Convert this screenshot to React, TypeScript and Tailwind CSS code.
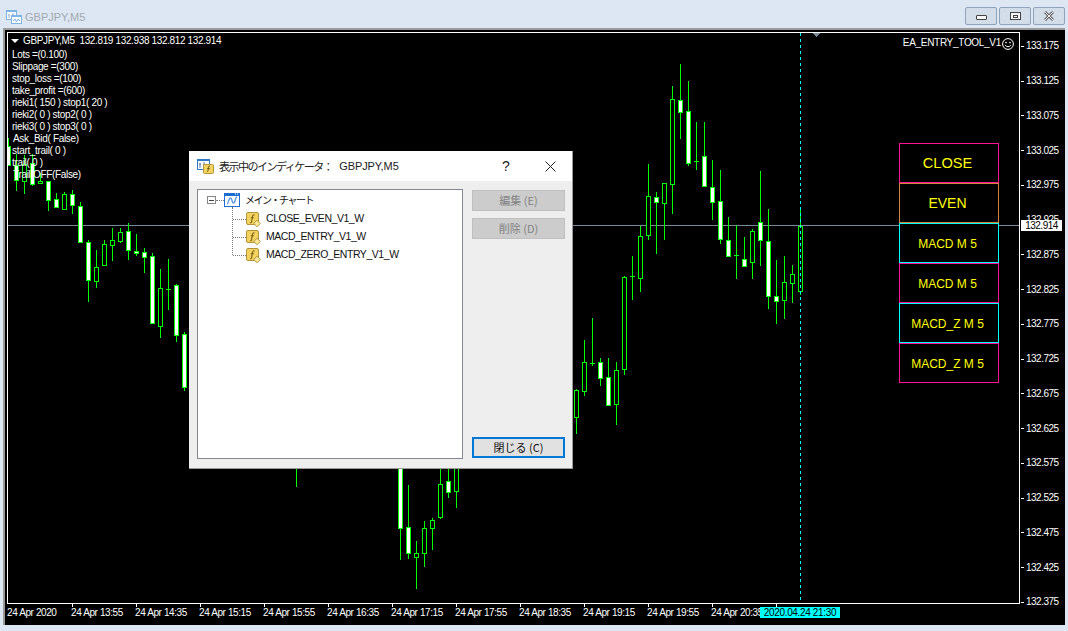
const FONT = "font-['Liberation_Sans',Arial,sans-serif]";
const JP = "font-['Noto_Sans_CJK_JP',sans-serif]";

// x, wick top, wick bottom, body top, body bottom, filled
type Candle = [number, number, number, number, number, boolean];

const candles: Candle[] = [
  [8, 138, 165, 146, 165, true],
  [16, 154, 191, 165, 180, true],
  [24, 155, 194, 164, 181, false],
  [32, 154, 186, 163, 184, true],
  [40, 173, 183, 181, 183, false],
  [48, 181, 211, 181, 200, true],
  [56, 193, 207, 199, 207, true],
  [64, 192, 210, 194, 209, false],
  [72, 190, 214, 194, 205, true],
  [80, 202, 242, 206, 242, true],
  [88, 240, 302, 242, 280, true],
  [96, 250, 288, 267, 281, false],
  [104, 240, 266, 244, 265, false],
  [112, 228, 261, 240, 245, false],
  [120, 228, 243, 232, 241, false],
  [128, 223, 260, 231, 250, true],
  [136, 234, 256, 251, 253, true],
  [144, 248, 273, 252, 257, true],
  [152, 253, 323, 256, 323, true],
  [160, 269, 338, 288, 326, false],
  [168, 259, 310, 289, 289, false],
  [176, 284, 342, 285, 335, true],
  [184, 332, 391, 334, 387, true],
  [296, 440, 487, 440, 440, false],
  [400, 440, 560, 440, 528, true],
  [408, 485, 559, 527, 553, true],
  [416, 541, 589, 553, 557, false],
  [424, 521, 567, 528, 553, false],
  [432, 518, 550, 520, 528, false],
  [440, 440, 519, 484, 517, false],
  [448, 440, 498, 481, 492, true],
  [456, 440, 508, 440, 491, false],
  [576, 389, 434, 390, 417, false],
  [584, 340, 396, 362, 391, false],
  [592, 318, 366, 363, 363, false],
  [600, 358, 386, 362, 378, true],
  [608, 358, 406, 377, 405, true],
  [616, 362, 425, 370, 404, false],
  [624, 276, 375, 277, 369, false],
  [632, 256, 300, 276, 276, false],
  [640, 226, 292, 236, 278, false],
  [648, 164, 240, 196, 235, false],
  [656, 192, 254, 197, 202, true],
  [664, 183, 240, 183, 203, false],
  [672, 86, 214, 99, 184, false],
  [680, 64, 139, 100, 112, true],
  [688, 81, 166, 111, 163, true],
  [696, 122, 170, 161, 161, false],
  [704, 122, 186, 156, 186, true],
  [712, 160, 220, 187, 202, true],
  [720, 170, 244, 201, 239, true],
  [728, 217, 256, 240, 256, true],
  [736, 225, 279, 255, 255, false],
  [744, 237, 266, 259, 266, true],
  [752, 229, 279, 231, 262, false],
  [760, 171, 266, 222, 240, true],
  [768, 209, 309, 241, 296, true],
  [776, 260, 324, 296, 301, true],
  [784, 256, 319, 282, 300, false],
  [792, 265, 303, 274, 283, false],
  [800, 209, 295, 226, 291, false],
];

const prices = [
  "133.175", "133.125", "133.075", "133.025", "132.975", "132.925", "132.875", "132.825", "132.775",
  "132.725", "132.675", "132.625", "132.575", "132.525", "132.475", "132.425", "132.375",
];

const times = [
  "24 Apr 2020", "24 Apr 13:55", "24 Apr 14:35", "24 Apr 15:15", "24 Apr 15:55", "24 Apr 16:35", "24 Apr 17:15",
  "24 Apr 17:55", "24 Apr 18:35", "24 Apr 19:15", "24 Apr 19:55", "24 Apr 20:35", "",
];

const params = [
  "Lots =(0.100)", "Slippage =(300)", "stop_loss =(100)", "take_profit =(600)", "rieki1( 150 ) stop1( 20 )",
  "rieki2( 0 ) stop2( 0 )", "rieki3( 0 ) stop3( 0 )", "Ask_Bid( False)", "start_trail( 0 )", "trail( 0 )",
  "Trail OFF(False)",
];

const buttons = [
  { label: "CLOSE", cls: "border-[#ff1493] text-[14.6px]" },
  { label: "EVEN", cls: "border-[#cd853f] text-[14px]" },
  { label: "MACD M 5", cls: "border-[#00ffff] text-[12px]" },
  { label: "MACD M 5", cls: "border-[#ff1493] text-[12px]" },
  { label: "MACD_Z M 5", cls: "border-[#00ffff] text-[12px]" },
  { label: "MACD_Z M 5", cls: "border-[#ff1493] text-[12px]" },
];

const Chart = () => (
  <svg width="1011" height="570" viewBox="8 33 1011 570" className="block" shapeRendering="crispEdges">
    <line x1="8" y1="225.5" x2="1019" y2="225.5" stroke="#778899" />
    {candles.map(([x, wt, wb, bt, bb, filled]) => (
      <g key={x}>
        <line x1={x + 0.5} y1={wt} x2={x + 0.5} y2={wb} stroke="#00ff00" />
        {bt === bb ? (
          <line x1={x - 2} y1={bt + 0.5} x2={x + 3} y2={bt + 0.5} stroke="#00ff00" />
        ) : (
          <rect x={x - 1.5} y={bt + 0.5} width="4" height={bb - bt} fill={filled ? "#ffffff" : "#000000"} stroke="#00ff00" />
        )}
      </g>
    ))}
    <line x1="800.5" y1="33" x2="800.5" y2="603" stroke="#00ffff" strokeDasharray="3 3" />
    <path d="M812 33h9l-4.5 4z" fill="#778899" />
  </svg>
);

const FuncIcon = () => (
  <svg width="15" height="15" viewBox="0 0 15 15" className="shrink-0">
    <rect x="0.5" y="0.5" width="12" height="12" rx="1.5" fill="#f3d25f" stroke="#b2943a" />
    <path d="M8.6 3c-1.4-.4-1.9.4-2.1 1.4L5.6 9.6c-.2 1-.6 1.3-1.5 1.1M4.8 5.8h3" fill="none" stroke="#7a6118" strokeWidth="1.1" />
    <path d="M11 8.2l3.3 3.3L11 14.8l-3.3-3.3z" fill="#fbe89a" stroke="#b2943a" />
  </svg>
);

const ChartIcon = () => (
  <svg width="16" height="14" viewBox="0 0 16 14" className="shrink-0">
    <rect x="0.5" y="0.5" width="15" height="13" fill="#ffffff" stroke="#1c6ed4" />
    <rect x="0" y="0" width="16" height="3" fill="#1c6ed4" />
    <path d="M11 1h1M13 1h1" stroke="#ffffff" />
    <path d="M3 11c1.5 0 1.5-6 3.5-6s1 5 3 5 1.5-6 3.5-6" fill="none" stroke="#5a9be6" strokeWidth="1.4" />
  </svg>
);

const Tree = () => (
  <div className="w-[266px] h-[270px] bg-white border border-[#828790] pt-px pl-[9px] shrink-0">
    <div className="flex items-center h-[18px]">
      <span className="flex items-center justify-center w-[9px] h-[8px] border border-[#888] shrink-0">
        <span className="block w-[5px] h-px bg-[#444]" />
      </span>
      <span className="w-[8px] border-t border-dotted border-[#777]" />
      <ChartIcon />
      <span className={`ml-[5px] mb-[2px] text-[10px] tracking-[-1.5px] text-[#111] ${JP}`}>メイン・チャート</span>
    </div>
    <div className="ml-[25px] -mt-[2px] pt-[3px] h-[48px] border-l border-dotted border-[#777]">
      {["CLOSE_EVEN_V1_W", "MACD_ENTRY_V1_W", "MACD_ZERO_ENTRY_V1_W"].map((name) => (
        <div key={name} className="flex items-center h-[18px]">
          <span className="w-[13px] border-t border-dotted border-[#777]" />
          <FuncIcon />
          <span className="ml-[5px] text-[10.5px] tracking-[-0.45px] text-[#111] whitespace-nowrap">{name}</span>
        </div>
      ))}
    </div>
  </div>
);

const Dialog = () => (
  <div className={`absolute left-[189px] top-[151px] w-[384px] h-[318px] bg-[#eeeeee] border-r border-b border-[#9a9a9a] flex flex-col ${FONT}`}>
    <div className="h-[30px] bg-white flex items-center pl-[8px] shrink-0">
      <svg width="17" height="15" viewBox="0 0 17 15" className="shrink-0">
        <rect x="0.5" y="0.5" width="12" height="10" fill="#ffffff" stroke="#2e7cc9" />
        <path d="M0 0h13v2H0z" fill="#2e7cc9" />
        <path d="M3 4v5M2 5h2M7 3v5M6 6h2" stroke="#5a7fa8" />
        <rect x="6.5" y="5.5" width="10" height="9" rx="1" fill="#f3d25f" stroke="#b2943a" />
        <path d="M13 7.2c-1-.2-1.4.2-1.5 1l-.5 3.5c-.1.6-.5.9-1 .8M10.3 9.5h2.4" fill="none" stroke="#6b5410" />
      </svg>
      <span className={`ml-[5px] text-[11px] tracking-[-1.5px] text-[#222] whitespace-nowrap ${JP}`}>表示中のインディケータ：</span>
      <span className="ml-[7px] text-[11px] tracking-[-0.1px] text-[#222]">GBPJPY,M5</span>
      <span className="ml-auto text-[14px] text-[#222] w-[12px] text-center">?</span>
      <svg width="11" height="11" viewBox="0 0 11 11" className="ml-[33px] mr-[16px] shrink-0">
        <path d="M0.5 0.5l10 10M10.5 0.5l-10 10" stroke="#222" />
      </svg>
    </div>
    <div className="flex flex-1 pl-[8px] pt-[8px]">
      <Tree />
      <div className={`flex flex-col ml-[9px] mt-px w-[93px] h-[268px] text-[11px] ${JP}`}>
        <div className="h-[21px] bg-[#cccccc] border border-[#bfbfbf] flex items-center justify-center text-[#838383]">編集 (E)</div>
        <div className="h-[21px] mt-[7px] bg-[#cccccc] border border-[#bfbfbf] flex items-center justify-center text-[#838383]">削除 (D)</div>
        <div className="mt-auto h-[21px] bg-[#e1e1e1] border-2 border-[#0078d7] flex items-center justify-center text-[#111]">閉じる (C)</div>
      </div>
    </div>
  </div>
);

export default function App() {
  return (
    <div className={`relative w-[1068px] h-[631px] overflow-hidden bg-[#dce7f3] flex flex-col ${FONT}`}>
      {/* TITLE BAR */}
      <div className="h-[28px] shrink-0 flex items-start pl-[6px] pt-[7px]">
        <svg width="16" height="15" viewBox="0 0 16 15" className="shrink-0 mt-[2px]">
          <rect x="0.5" y="1.5" width="10" height="9" fill="#ffffff" stroke="#7db4e8" />
          <path d="M0 1h11v2H0z" fill="#7db4e8" />
          <path d="M3 5v4M2 6h2M7 4v4M6 6h2" stroke="#9fb6cf" />
          <rect x="5.5" y="6.5" width="10" height="8" fill="#ffffff" stroke="#7db4e8" />
          <path d="M5 6h11v2H5z" fill="#7db4e8" />
          <path d="M7 12l2-2 1.5 3 1.5-3 2 2" fill="none" stroke="#7db4e8" />
        </svg>
        <span className="ml-[3px] mt-[2px] text-[11px] leading-[16px] text-[#a3a9b0]">GBPJPY,M5</span>
        <div className="ml-auto flex gap-[2px] pr-[3px]">
          {["min", "max", "close"].map((k) => (
            <div key={k} className="w-[32px] h-[18px] rounded-[2px] border border-[#8fa3bc] bg-[#d3dde9] flex items-center justify-center">
              {k === "min" && <span className="block w-[11px] h-[5px] bg-[#f4f6f9] border border-[#444] rounded-[1px] mt-[3px]" />}
              {k === "max" && (
                <span className="flex items-center justify-center w-[11px] h-[8px] bg-[#f4f6f9] border border-[#444]">
                  <span className="block w-[5px] h-[3px] border border-[#444]" />
                </span>
              )}
              {k === "close" && (
                <svg width="12" height="10" viewBox="0 0 12 10">
                  <path d="M2 1l8 8M10 1l-8 8" stroke="#666" strokeWidth="2.8" />
                  <path d="M2 1l8 8M10 1l-8 8" stroke="#eee" strokeWidth="1" />
                </svg>
              )}
            </div>
          ))}
        </div>
      </div>

      {/* WINDOW BODY */}
      <div className="ml-[3px] w-[1062px] h-[597px] border-t-2 border-l-2 border-[#9a9a9a] bg-black pl-[2px] pt-[2px] flex flex-col">
        <div className="flex h-[572px] shrink-0">
          <div className="w-[1013px] h-[572px] border border-white overflow-hidden shrink-0">
            <Chart />
          </div>
          {/* PRICE AXIS */}
          <div className="flex flex-col -mt-[3px] h-[575px] text-[10px] tracking-[-0.5px] text-white">
            {prices.map((p) => (
              <div key={p} className="h-[34.75px] shrink-0 flex items-center">
                <span className="block ml-px w-[3px] h-px bg-white mr-[2px]" />
                <span className="leading-none">{p}</span>
              </div>
            ))}
          </div>
        </div>
        {/* TIME AXIS */}
        <div className="flex text-[10px] tracking-[-0.4px] text-white">
          {times.map((t, i) => (
            <div key={i} className="w-[64px] shrink-0 flex flex-col whitespace-nowrap">
              <span className={i === 0 ? "h-[3px]" : "block ml-px w-px h-[3px] bg-white"} />
              <span className="leading-[11px]">{t}</span>
            </div>
          ))}
        </div>
      </div>

      {/* CHART OVERLAYS */}
      <div className="absolute left-[760px] top-[607px] w-[80px] h-[11px] bg-[#00ffff] text-black text-[10px] tracking-[-0.35px] text-center leading-[11px]">2020.04.24 21:30</div>
      <div className="absolute left-[10px] top-[34px] text-[10px] tracking-[-0.32px] leading-[12px] text-white whitespace-pre">
        <div className="flex items-center h-[13px] tracking-[-0.36px]">
          <span className="ml-px w-0 h-0 border-x-[4px] border-t-[4px] border-x-transparent border-t-white mr-[4px]" />
          GBPJPY,M5  132.819 132.938 132.812 132.914
        </div>
        <div className="mt-[2px]">
          {params.map((p, i) => (
            <div key={p} className={i === 7 || i === 10 ? "h-[12px] pl-[3px]" : "h-[12px] pl-[2px]"}>{p}</div>
          ))}
        </div>
      </div>
      <div className="absolute right-[54px] top-[34px] flex items-center text-[10px] tracking-[-0.3px] text-white leading-[13px]">
        EA_ENTRY_TOOL_V1
        <svg width="12" height="12" viewBox="0 0 12 12" className="ml-px mt-[4px]">
          <circle cx="6" cy="6" r="5.4" fill="none" stroke="#fff" />
          <circle cx="4" cy="4.6" r="0.8" fill="#fff" />
          <circle cx="8" cy="4.6" r="0.8" fill="#fff" />
          <path d="M3.2 7.2c1 2 4.6 2 5.6 0" fill="none" stroke="#fff" />
        </svg>
      </div>
      <div className="absolute left-[899px] top-[143px] flex flex-col w-[100px]">
        {buttons.map((b, i) => (
          <div key={i} className={`h-[40px] bg-black border flex items-center justify-center pt-px pr-[3px] text-[#ffff00] ${b.cls}`}>{b.label}</div>
        ))}
      </div>
      <div className="absolute left-[1021px] top-[220px] w-[41px] h-[11px] bg-white text-black text-[10px] tracking-[-0.5px] leading-[11px] text-center">132.914</div>

      <Dialog />
    </div>
  );
}
